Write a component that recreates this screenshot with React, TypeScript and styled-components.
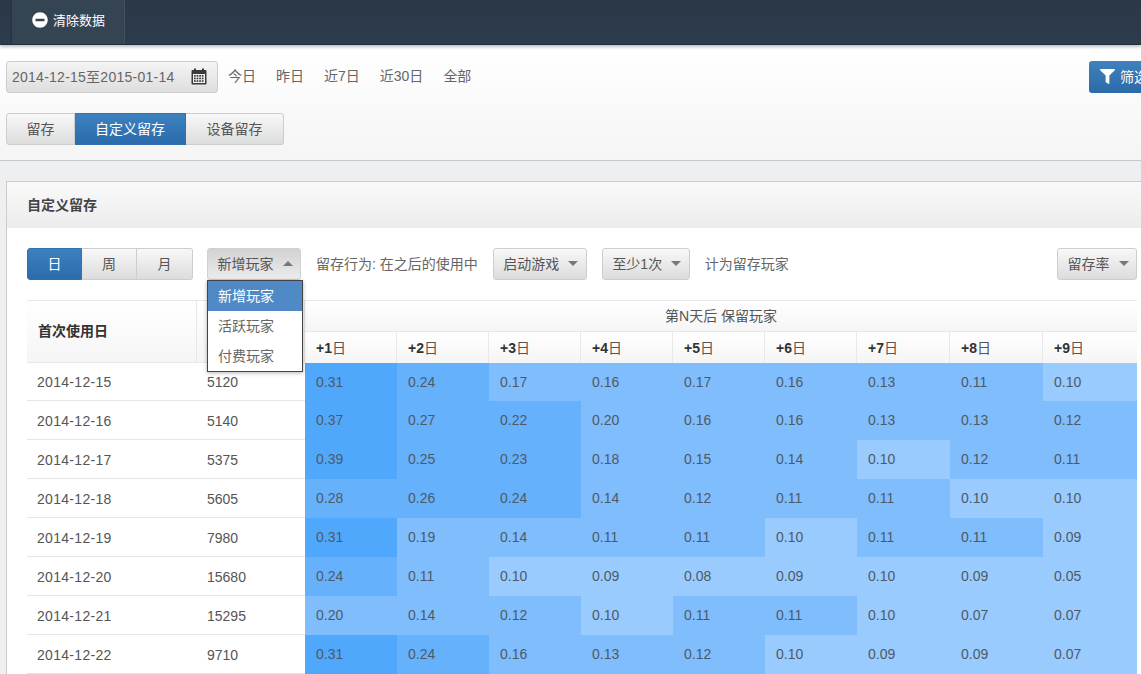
import React from 'react'
import styled, { createGlobalStyle } from 'styled-components'
import { FaFilter, FaMinusCircle } from 'react-icons/fa'

const GlobalStyle = createGlobalStyle`
  html, body {
    margin: 0;
    height: 674px;
    overflow: hidden;
    background: #eeeff0;
    font-family: "Liberation Sans", "Noto Sans CJK SC", sans-serif;
    font-size: 14px;
    color: #555;
  }
  * { box-sizing: border-box; }
`

const Page = styled.div`
  width: 1141px;
  height: 674px;
  overflow: hidden;
`

const TopBar = styled.div`
  height: 45px;
  padding-left: 11px;
  display: flex;
  background: linear-gradient(#2a3848, #2d3c4c);
  border-bottom: 1px solid #22303e;
  box-shadow: 0 2px 3px rgba(0, 0, 0, 0.25);
  position: relative;
`

const TopTab = styled.div`
  width: 114px;
  height: 44px;
  padding: 0 0 5px 20px;
  display: flex;
  align-items: center;
  gap: 5px;
  background: #354452;
  border-left: 1px solid #27343f;
  border-right: 1px solid #43515e;
  color: #fff;
  font-size: 13px;
`

const Toolbar = styled.div`
  height: 116px;
  padding: 16px 0 0 6px;
  background: linear-gradient(#fff, #f5f5f5);
  border-bottom: 1px solid #c8c8c8;
`

const ToolRow = styled.div`
  display: flex;
  align-items: center;
  height: 32px;
  margin-bottom: 20px;
`

const DateInput = styled.div`
  width: 212px;
  height: 32px;
  padding: 0 10px 2px 5px;
  display: flex;
  align-items: center;
  justify-content: space-between;
  font-size: 14px;
  letter-spacing: 0.25px;
  color: #666;
  background: linear-gradient(#f4f4f4, #dedede);
  border: 1px solid #ccc;
  border-radius: 3px;
`

const QuickLinks = styled.div`
  display: flex;
  gap: 20px;
  margin-left: 10px;
  margin-top: -4px;
  color: #666;
`

const FilterButton = styled.div`
  margin-left: auto;
  margin-right: -30px;
  flex-shrink: 0;
  width: 82px;
  height: 32px;
  padding: 0 0 2px 11px;
  display: flex;
  align-items: center;
  gap: 5px;
  color: #fff;
  background: linear-gradient(#3f82bd, #2c6aa8);
  border-radius: 3px;
`

const ButtonGroup = styled.div`
  display: flex;
  height: 32px;
`

const GroupButton = styled.div<{ $width: number; $active?: boolean }>`
  width: ${({ $width }) => $width}px;
  padding-bottom: 2px;
  display: flex;
  align-items: center;
  justify-content: center;
  color: ${({ $active }) => ($active ? '#fff' : '#555')};
  background: ${({ $active }) =>
    $active ? 'linear-gradient(#3d81bf, #2b6cab)' : 'linear-gradient(#f8f8f8, #dcdcdc)'};
  border: 1px solid ${({ $active }) => ($active ? '#2f70ae' : '#cdcdcd')};
  border-left-width: 0;
  &:first-child {
    border-left-width: 1px;
    border-radius: 3px 0 0 3px;
  }
  &:last-child {
    border-radius: 0 3px 3px 0;
  }
`

const Panel = styled.div`
  margin: 20px -10px 0 6px;
  background: #fff;
  border: 1px solid #ccc;
  border-bottom: 0;
  height: 520px;
`

const PanelHead = styled.div`
  height: 46px;
  padding: 0 0 2px 20px;
  display: flex;
  align-items: center;
  font-weight: bold;
  color: #444;
  background: linear-gradient(#fafafa, #ececec);
`

const PanelBody = styled.div`
  padding: 20px 0 0 20px;
  width: 1130px;
`

const Controls = styled.div`
  display: flex;
  align-items: center;
  height: 32px;
  margin-bottom: 20px;
`

const DropWrap = styled.div<{ $left: number }>`
  position: relative;
  margin-left: ${({ $left }) => $left}px;
`

const DropButton = styled.div<{ $width: number; $open?: boolean }>`
  width: ${({ $width }) => $width}px;
  height: 32px;
  padding: 0 0 2px 2px;
  display: flex;
  align-items: center;
  justify-content: center;
  gap: 9px;
  color: #555;
  background: ${({ $open }) =>
    $open ? 'linear-gradient(#d2d2d2, #ececec)' : 'linear-gradient(#f8f8f8, #dcdcdc)'};
  border: 1px solid ${({ $open }) => ($open ? '#d0d0d0' : '#cdcdcd')};
  border-radius: 3px;
`

const Caret = styled.span<{ $up?: boolean }>`
  width: 0;
  height: 0;
  border-left: 5px solid transparent;
  border-right: 5px solid transparent;
  ${({ $up }) => ($up ? 'border-bottom: 5px solid #777;' : 'border-top: 5px solid #777;')}
`

const Menu = styled.div`
  position: absolute;
  top: 32px;
  left: 0;
  width: 96px;
  height: 92px;
  z-index: 5;
  background: #fff;
  border: 1px solid #444;
  box-shadow: 0 1px 4px rgba(0, 0, 0, 0.3);
`

const MenuItem = styled.div<{ $active?: boolean }>`
  height: 30px;
  padding: 0 0 2px 10px;
  display: flex;
  align-items: center;
  color: ${({ $active }) => ($active ? '#fff' : '#666')};
  background: ${({ $active }) => ($active ? '#4f8ac6' : 'transparent')};
`

const Hint = styled.div<{ $left: number }>`
  margin-left: ${({ $left }) => $left}px;
  margin-top: -3px;
  color: #666;
  white-space: nowrap;
`

const RateDrop = styled.div`
  margin-left: auto;
`

const Grid = styled.table`
  width: 1110px;
  table-layout: fixed;
  border-collapse: separate;
  border-spacing: 0;
`

const HeadCell = styled.th`
  height: 31px;
  padding: 0 11px 2px;
  text-align: left;
  font-weight: normal;
  color: #555;
  background: linear-gradient(#fff, #f5f5f5);
  border-top: 1px solid #e8e8e8;
  border-right: 1px solid #e8e8e8;
  &:last-child { border-right: 0; }
  b { color: #333; }
`

const DayHead = styled(HeadCell)`
  height: 32px;
`

const StickyHead = styled(HeadCell)`
  border-bottom: 1px solid #e8e8e8;
  padding-bottom: 3px;
  font-weight: bold;
  color: #333;
`

const SpanHead = styled(HeadCell)`
  text-align: center;
  padding-left: 0;
  padding-right: 0;
`

const BodyRow = styled.tr`
  &:first-child td {
    height: 38px;
    padding-bottom: 0;
  }
`

const BodyCell = styled.td`
  height: 39px;
  padding: 1px 10px 0;
  color: #555;
  border-bottom: 1px solid #e6e6e6;
`

const DateText = styled.span`
  letter-spacing: 0.3px;
`

const HeatCell = styled.td<{ $value: number }>`
  height: 39px;
  padding: 0 10px 2px 11px;
  color: #4d5a66;
  background: ${({ $value }) =>
    $value >= 0.3 ? '#50a8fc' : $value > 0.2 ? '#66b1fc' : $value > 0.1 ? '#80bdfd' : '#9acbfe'};
`

const CalendarIcon = () => (
  <svg width="16" height="17" viewBox="0 0 16 17">
    <rect x="0.5" y="2" width="15" height="14.5" rx="1" fill="#3a3a3a" />
    <rect x="3" y="0.5" width="2" height="3" fill="#3a3a3a" />
    <rect x="11" y="0.5" width="2" height="3" fill="#3a3a3a" />
    <rect x="2" y="6" width="12" height="9" fill="#f2f2f2" />
    {[0, 1, 2, 3].map((c) =>
      [0, 1, 2].map((r) => (
        <rect key={`${c}-${r}`} x={3 + c * 2.6} y={7 + r * 2.6} width="1.7" height="1.7" fill="#3a3a3a" />
      ))
    )}
  </svg>
)

const days = [1, 2, 3, 4, 5, 6, 7, 8, 9]

const rows: [string, number, number[]][] = [
  ['2014-12-15', 5120, [0.31, 0.24, 0.17, 0.16, 0.17, 0.16, 0.13, 0.11, 0.1]],
  ['2014-12-16', 5140, [0.37, 0.27, 0.22, 0.2, 0.16, 0.16, 0.13, 0.13, 0.12]],
  ['2014-12-17', 5375, [0.39, 0.25, 0.23, 0.18, 0.15, 0.14, 0.1, 0.12, 0.11]],
  ['2014-12-18', 5605, [0.28, 0.26, 0.24, 0.14, 0.12, 0.11, 0.11, 0.1, 0.1]],
  ['2014-12-19', 7980, [0.31, 0.19, 0.14, 0.11, 0.11, 0.1, 0.11, 0.11, 0.09]],
  ['2014-12-20', 15680, [0.24, 0.11, 0.1, 0.09, 0.08, 0.09, 0.1, 0.09, 0.05]],
  ['2014-12-21', 15295, [0.2, 0.14, 0.12, 0.1, 0.11, 0.11, 0.1, 0.07, 0.07]],
  ['2014-12-22', 9710, [0.31, 0.24, 0.16, 0.13, 0.12, 0.1, 0.09, 0.09, 0.07]],
]

const colWidths = [170, 108, 92, 92, 92, 92, 92, 92, 93, 93, 94]

export default function App() {
  return (
    <Page>
      <GlobalStyle />
      <TopBar>
        <TopTab>
          <FaMinusCircle size={16} />
          清除数据
        </TopTab>
      </TopBar>
      <Toolbar>
        <ToolRow>
          <DateInput>
            2014-12-15至2015-01-14
            <CalendarIcon />
          </DateInput>
          <QuickLinks>
            <span>今日</span>
            <span>昨日</span>
            <span>近7日</span>
            <span>近30日</span>
            <span>全部</span>
          </QuickLinks>
          <FilterButton>
            <FaFilter size={15} />
            筛选
          </FilterButton>
        </ToolRow>
        <ButtonGroup>
          <GroupButton $width={69}>留存</GroupButton>
          <GroupButton $width={111} $active>自定义留存</GroupButton>
          <GroupButton $width={98}>设备留存</GroupButton>
        </ButtonGroup>
      </Toolbar>
      <Panel>
        <PanelHead>自定义留存</PanelHead>
        <PanelBody>
          <Controls>
            <ButtonGroup>
              <GroupButton $width={55} $active>日</GroupButton>
              <GroupButton $width={55}>周</GroupButton>
              <GroupButton $width={56}>月</GroupButton>
            </ButtonGroup>
            <DropWrap $left={14}>
              <DropButton $width={94} $open>
                新增玩家
                <Caret $up />
              </DropButton>
              <Menu>
                <MenuItem $active>新增玩家</MenuItem>
                <MenuItem>活跃玩家</MenuItem>
                <MenuItem>付费玩家</MenuItem>
              </Menu>
            </DropWrap>
            <Hint $left={15}>留存行为: 在之后的使用中</Hint>
            <DropWrap $left={15}>
              <DropButton $width={94}>
                启动游戏
                <Caret />
              </DropButton>
            </DropWrap>
            <DropWrap $left={15}>
              <DropButton $width={88}>
                至少1次
                <Caret />
              </DropButton>
            </DropWrap>
            <Hint $left={15}>计为留存玩家</Hint>
            <RateDrop>
              <DropButton $width={80}>
                留存率
                <Caret />
              </DropButton>
            </RateDrop>
          </Controls>
          <Grid>
            <colgroup>
              {colWidths.map((w, i) => (
                <col key={i} style={{ width: w }} />
              ))}
            </colgroup>
            <thead>
              <tr>
                <StickyHead rowSpan={2}>首次使用日</StickyHead>
                <StickyHead rowSpan={2} />
                <SpanHead colSpan={9}>第N天后 保留玩家</SpanHead>
              </tr>
              <tr>
                {days.map((d) => (
                  <DayHead key={d}>
                    <b>+{d}</b>日
                  </DayHead>
                ))}
              </tr>
            </thead>
            <tbody>
              {rows.map(([date, count, values]) => (
                <BodyRow key={date}>
                  <BodyCell>
                    <DateText>{date}</DateText>
                  </BodyCell>
                  <BodyCell>{count}</BodyCell>
                  {values.map((v, i) => (
                    <HeatCell key={i} $value={v}>
                      {v.toFixed(2)}
                    </HeatCell>
                  ))}
                </BodyRow>
              ))}
            </tbody>
          </Grid>
        </PanelBody>
      </Panel>
    </Page>
  )
}
